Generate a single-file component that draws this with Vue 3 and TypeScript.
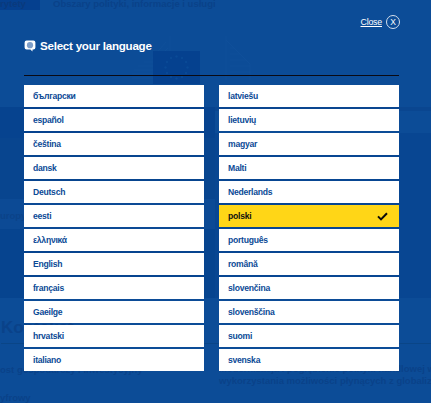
<script setup lang="ts">
const leftColumn: string[] = ['български', 'español', 'čeština', 'dansk', 'Deutsch', 'eesti', 'ελληνικά', 'English', 'français', 'Gaeilge', 'hrvatski', 'italiano']
const rightColumn: string[] = ['latviešu', 'lietuvių', 'magyar', 'Malti', 'Nederlands', 'polski', 'português', 'română', 'slovenčina', 'slovenščina', 'suomi', 'svenska']
const selected = 'polski'
const stars = Array.from({ length: 12 }, (_, n) => ({
  x: 23.5 + 11 * Math.cos((n * Math.PI) / 6),
  y: 16.5 + 11 * Math.sin((n * Math.PI) / 6),
}))
</script>

<template>
  <div class="page">
    <div class="under" aria-hidden="true">
      <div class="under-top">
        <span class="under-tab">rytety</span>
        <span class="under-nav">Obszary polityki, informacje i usługi</span>
      </div>
      <svg class="under-building" width="130" height="50" viewBox="0 0 130 50">
        <g fill="none" stroke="#1a5aa3" stroke-width="1" opacity="0.25">
          <path d="M2 44h22M2 40h24M4 36h24M8 32h22M14 28h18M22 24h14M30 20h8" />
          <path d="M40 2v40M36 8l-12 14M38 14l-12 12" />
          <path d="M96 2v44M96 6l24 24v16M100 14h4M100 20h10M100 26h16M100 32h20M100 38h20" />
        </g>
      </svg>
      <div class="under-flag">
        <svg width="47" height="33" viewBox="0 0 47 33">
          <circle v-for="(s, i) in stars" :key="i" :cx="s.x" :cy="s.y" r="1.2" fill="#0a4a96" />
        </svg>
      </div>
      <div class="under-hero">
        <div class="hero-left"><span class="hero-word">uropy</span></div>
        <div class="hero-right"></div>
      </div>
      <div class="under-heading">Kontekst</div>
      <div class="under-col left">ost gospodarczy i inwestycyjny</div>
      <div class="under-col right">Modernizacja i pogłębienie polityki handlowej w<br />wykorzystania możliwości płynących z globalizac</div>
      <div class="under-col bottom">yfrowy</div>
    </div>

    <div class="overlay">
      <div class="close-row">
        <a class="close-link" href="#">Close</a>
        <span class="close-x">X</span>
      </div>
      <h2 class="title">
        <svg class="bubble" width="12" height="12" viewBox="0 0 12 12">
          <path d="M2.6.6h6.8a2 2 0 0 1 2 2v5a2 2 0 0 1-2 2H8.6l-.2 1.9-2-1.9H2.6a2 2 0 0 1-2-2v-5a2 2 0 0 1 2-2z" fill="#fff" />
          <circle cx="6" cy="5.2" r="3.1" fill="#7f9fc9" />
        </svg>
        Select your language
      </h2>
      <div class="rule"></div>
      <div class="columns">
        <ul v-for="(col, i) in [leftColumn, rightColumn]" :key="i" class="list">
          <li v-for="lang in col" :key="lang" class="item" :class="{ active: lang === selected }">
            <span>{{ lang }}</span>
            <svg v-if="lang === selected" class="check" width="11" height="9" viewBox="0 0 11 9">
              <path d="M1 4.4l3 3 6-6.2" fill="none" stroke="#0a0a0a" stroke-width="2" />
            </svg>
          </li>
        </ul>
      </div>
    </div>
  </div>
</template>

<style scoped>
.page {
  position: relative;
  width: 431px;
  height: 403px;
  overflow: hidden;
  background: #0c4c97;
  font-family: "Liberation Sans", Arial, sans-serif;
}
.under {
  color: #0a4289;
  font-weight: 700;
}
.under-top {
  position: absolute;
  left: 0;
  top: 0;
  display: flex;
  align-items: flex-start;
  gap: 13px;
  height: 10px;
  font-size: 9.5px;
  line-height: 8px;
}
.under-tab {
  width: 40px;
  height: 10px;
  background: #05408f;
  color: #0a3a7d;
  overflow: hidden;
  white-space: nowrap;
}
.under-nav {
  color: #0a4289;
}
.under-building {
  position: absolute;
  left: 130px;
  top: 34px;
}
.under-flag {
  position: absolute;
  left: 153px;
  top: 51px;
  width: 47px;
  height: 33px;
  background: #05418f;
}
.under-hero {
  position: absolute;
  left: 0;
  top: 107px;
  display: flex;
  justify-content: space-between;
  width: 431px;
  height: 191px;
  background: linear-gradient(#0a4690 0 4px, #0c4c97 4px 26px, #084692 26px);
}
.hero-left {
  position: relative;
  width: 215px;
  background: linear-gradient(#06438f 0 31px, #08458f 31px 92px, #0c4a95 92px 122px, #06448f 122px);
}
.hero-right {
  width: 216px;
}
.hero-word {
  position: absolute;
  left: 0;
  top: 103px;
  font-size: 9.5px;
  line-height: 12px;
  color: #0b4389;
}
.under-heading {
  position: absolute;
  left: 1px;
  top: 318px;
  width: 430px;
  height: 25px;
  border-bottom: 1px solid #0a4587;
  font-size: 17px;
  line-height: 20px;
}
.under-col {
  position: absolute;
  font-size: 9.5px;
  line-height: 12px;
  white-space: nowrap;
}
.under-col.left {
  left: 0;
  top: 364px;
}
.under-col.right {
  left: 219px;
  top: 363px;
}
.under-col.bottom {
  left: 0;
  top: 392px;
}
.overlay {
  position: absolute;
  inset: 0;
  display: flex;
  flex-direction: column;
  padding: 0 32px 0 24px;
  color: #fff;
}
.close-row {
  display: flex;
  justify-content: flex-end;
  align-items: center;
  gap: 4px;
  height: 14px;
  margin-top: 15px;
  margin-right: -1px;
}
.close-link {
  color: #fff;
  font-size: 8.8px;
  letter-spacing: -0.2px;
  line-height: 14px;
  text-decoration: underline;
}
.close-x {
  display: flex;
  align-items: center;
  justify-content: center;
  width: 14px;
  height: 14px;
  box-sizing: border-box;
  border: 1px solid #d5dfec;
  border-radius: 50%;
  font-size: 8.5px;
}
.title {
  display: flex;
  align-items: center;
  gap: 4px;
  height: 16px;
  margin: 9px 0 0;
  font-size: 11.6px;
  letter-spacing: -0.25px;
  line-height: 16px;
  font-weight: 700;
}
.rule {
  height: 1px;
  margin-top: 21px;
  background: #0a0a14;
}
.columns {
  display: flex;
  gap: 15px;
  margin-top: 9px;
}
.list {
  display: flex;
  flex-direction: column;
  gap: 2px;
  width: 180px;
  margin: 0;
  padding: 0;
  list-style: none;
}
.item {
  display: flex;
  align-items: center;
  justify-content: space-between;
  height: 22px;
  padding: 0 11px 0 9px;
  background: #fff;
  color: #0b4a96;
  font-size: 8.6px;
  letter-spacing: -0.25px;
  font-weight: 700;
}
.item.active {
  background: #ffd617;
  color: #111;
}
</style>
